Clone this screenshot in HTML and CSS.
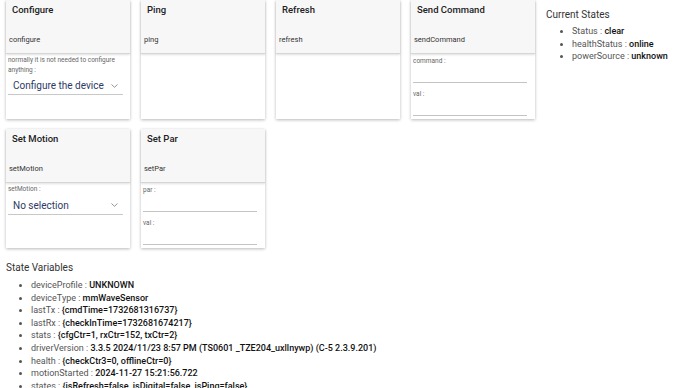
FILE: index.html
```html
<!DOCTYPE html>
<html lang="en">
<head>
    <meta charset="UTF-8">
    <title>Device</title>
    <link rel="stylesheet" href="styles.css">
</head>
<body>
    <div class="top">
        <div class="cards">
            <div class="card">
                <div class="card-head">
                    <div class="title">Configure</div>
                    <div class="cmd">configure</div>
                </div>
                <div class="card-body">
                    <div class="label">normally it is not needed to configure anything :</div>
                    <div class="select">
                        <span>Configure the device</span>
                        <svg width="7" height="4" viewBox="0 0 7 4"><polyline points="0.5,0.5 3.5,3.3 6.5,0.5" fill="none" stroke="#8a8a8a" stroke-width="0.9"/></svg>
                    </div>
                </div>
            </div>
            <div class="card">
                <div class="card-head">
                    <div class="title">Ping</div>
                    <div class="cmd">ping</div>
                </div>
                <div class="card-body"></div>
            </div>
            <div class="card">
                <div class="card-head">
                    <div class="title">Refresh</div>
                    <div class="cmd">refresh</div>
                </div>
                <div class="card-body"></div>
            </div>
            <div class="card">
                <div class="card-head">
                    <div class="title">Send Command</div>
                    <div class="cmd">sendCommand</div>
                </div>
                <div class="card-body">
                    <div class="field">
                        <div class="label">command :</div>
                        <div class="input"></div>
                    </div>
                    <div class="field">
                        <div class="label">val :</div>
                        <div class="input"></div>
                    </div>
                </div>
            </div>
            <div class="card">
                <div class="card-head">
                    <div class="title">Set Motion</div>
                    <div class="cmd">setMotion</div>
                </div>
                <div class="card-body">
                    <div class="label">setMotion :</div>
                    <div class="select">
                        <span>No selection</span>
                        <svg width="7" height="4" viewBox="0 0 7 4"><polyline points="0.5,0.5 3.5,3.3 6.5,0.5" fill="none" stroke="#8a8a8a" stroke-width="0.9"/></svg>
                    </div>
                </div>
            </div>
            <div class="card">
                <div class="card-head">
                    <div class="title">Set Par</div>
                    <div class="cmd">setPar</div>
                </div>
                <div class="card-body">
                    <div class="field">
                        <div class="label">par :</div>
                        <div class="input"></div>
                    </div>
                    <div class="field">
                        <div class="label">val :</div>
                        <div class="input"></div>
                    </div>
                </div>
            </div>
        </div>
        <div class="states">
            <div class="heading">Current States</div>
            <ul class="vars">
                <li>Status : <b>clear</b></li>
                <li>healthStatus : <b>online</b></li>
                <li>powerSource : <b>unknown</b></li>
            </ul>
        </div>
    </div>

    <div class="state-vars">
        <div class="heading">State Variables</div>
        <ul class="vars">
            <li>deviceProfile : <b>UNKNOWN</b></li>
            <li>deviceType : <b>mmWaveSensor</b></li>
            <li>lastTx : <b>{cmdTime=1732681316737}</b></li>
            <li>lastRx : <b>{checkInTime=1732681674217}</b></li>
            <li>stats : <b>{cfgCtr=1, rxCtr=152, txCtr=2}</b></li>
            <li>driverVersion : <b>3.3.5 2024/11/23 8:57 PM (TS0601 _TZE204_uxllnywp) (C-5 2.3.9.201)</b></li>
            <li>health : <b>{checkCtr3=0, offlineCtr=0}</b></li>
            <li>motionStarted : <b>2024-11-27 15:21:56.722</b></li>
            <li>states : <b>{isRefresh=false, isDigital=false, isPing=false}</b></li>
        </ul>
    </div>
</body>
</html>
```

FILE: styles.css
```css
body {
    margin: 0;
    background: #fff;
    color: #222;
    font-family: Roboto, "Liberation Sans", sans-serif;
}
.top {
    display: flex;
}
.cards {
    width: 535px;
    box-sizing: border-box;
    padding-left: 6px;
    display: flex;
    flex-wrap: wrap;
    gap: 10px 11px;
}
.card {
    width: 124px;
    height: 119px;
    background: #fff;
    box-shadow: 0 1px 3px rgba(0, 0, 0, 0.28);
    display: flex;
    flex-direction: column;
}
.card-head {
    height: 54px;
    box-sizing: border-box;
    background: #f7f7f7;
    border-bottom: 1px solid #d6d6d6;
    box-shadow: 0 1px 2px rgba(0, 0, 0, 0.12);
    padding: 4px 6px 8px 3px;
    display: flex;
    flex-direction: column;
}
.title {
    font-size: 9.5px;
    line-height: 12px;
    font-weight: 500;
    color: #222;
    padding-left: 3px;
}
.cmd {
    margin-top: auto;
    font-size: 7.5px;
    line-height: 10px;
    color: #333;
}
.card-body {
    padding: 2px 7px 0 2px;
}
.label {
    font-size: 6.5px;
    line-height: 9.5px;
    color: #666;
}
.select {
    display: flex;
    align-items: center;
    justify-content: space-between;
    padding: 4px 5px 2px 5px;
    border-bottom: 1px solid #c8c8c8;
    font-size: 10px;
    line-height: 13px;
    color: #2d3a66;
    white-space: nowrap;
}
.field + .field {
    margin-top: 6px;
}
.field .label {
    line-height: 10px;
}
.input {
    height: 16px;
    margin-right: 1px;
    border-bottom: 1px solid #c4c4c4;
}
.states {
    padding: 9px 0 0 11px;
}
.heading {
    font-size: 10px;
    line-height: 12px;
    color: #333;
}
.vars {
    margin: 4px 0 0;
    padding-left: 26px;
    font-size: 9px;
    line-height: 12.6px;
    color: #555;
}
.vars b {
    font-weight: 500;
    color: #111;
}
.state-vars {
    padding: 14px 0 0 6px;
}
.state-vars .vars {
    margin-top: 5px;
    padding-left: 25px;
}
```
